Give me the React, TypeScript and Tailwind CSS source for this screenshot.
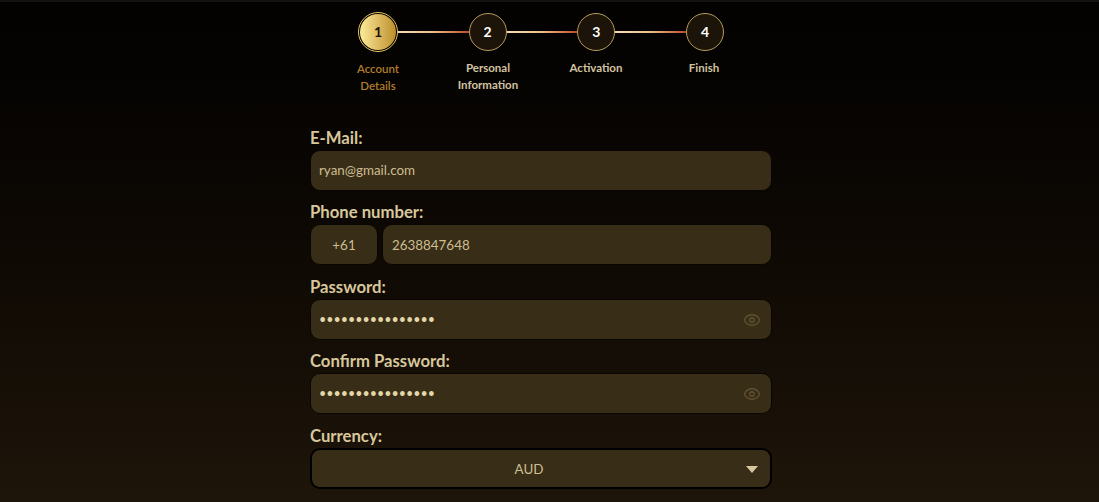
import { Eye } from 'lucide-react'

const steps = [
  { n: 1, label: ['Account', 'Details'] },
  { n: 2, label: ['Personal', 'Information'] },
  { n: 3, label: ['Activation'] },
  { n: 4, label: ['Finish'] },
]

function Line() {
  return <div className="h-[2px] w-[70.67px] bg-gradient-to-r from-[#f5deb0] via-[#eebd8c] to-[#b9492c]" />
}

function Stepper() {
  return (
    <div className="flex flex-col items-center">
      <div className="flex items-center">
        <div className="flex h-10 w-10 items-center justify-center rounded-full border border-[#e8c65c] bg-black p-[1px]">
          <div className="flex h-full w-full items-center justify-center rounded-full bg-gradient-to-r from-[#fdeb98] to-[#bd8f27] text-sm font-bold text-[#1a1206]">
            1
          </div>
        </div>
        {steps.slice(1).map((s) => (
          <div key={s.n} className="flex items-center">
            <Line />
            <div className="flex h-[38px] w-[38px] items-center justify-center rounded-full border border-[#b79b5c] bg-[#1c1409] text-sm font-bold text-white">
              {s.n}
            </div>
          </div>
        ))}
      </div>
      <div className="flex pt-[7px]">
        {steps.map((s, i) => (
          <div
            key={s.n}
            className={
              i === 0
                ? 'mt-[1px] mr-[2px] w-[108px] text-center text-[11.5px] leading-[17px] font-semibold text-[#b07d2a]'
                : 'w-[108px] text-center text-[11.5px] leading-[17px] font-bold text-[#d2c3a0]'
            }
          >
            {s.label.map((l) => (
              <div key={l}>{l}</div>
            ))}
          </div>
        ))}
      </div>
    </div>
  )
}

function Label({ children }: { children: string }) {
  return <div className="h-[24px] pt-[1px] text-[16.7px] leading-[22px] font-bold text-[#d8c79c]">{children}</div>
}

const fieldClass = 'h-[41px] rounded-[10px] border-[1.5px] border-[#080502] bg-[#382d16] outline-none'

function PasswordField() {
  return (
    <div className="relative">
      <input
        type="password"
        readOnly
        value="ryanpassword1234"
        className={fieldClass + ' w-full px-[8px] text-[12.5px] text-[#e3d6a8]'}
      />
      <Eye className="absolute top-[12px] right-[11px] h-[18px] w-[18px] text-[#5f5033]" strokeWidth={1.8} />
    </div>
  )
}

export default function App() {
  return (
    <div
      className="h-screen overflow-hidden border-t-2 border-[#131313] bg-gradient-to-b from-[#030201] to-[#1e150a] pr-[17px]"
      style={{ fontFamily: 'Lato, "Noto Sans", sans-serif' }}
    >
      <div className="flex flex-col items-center pt-[10px]">
        <Stepper />
        <div className="mt-[31.5px] flex w-[462px] flex-col gap-[9.67px]">
          <div>
            <Label>E-Mail:</Label>
            <input readOnly value="ryan@gmail.com" className={fieldClass + ' w-full px-[8px] text-[13.4px] text-[#cdbd92]'} />
          </div>
          <div>
            <Label>Phone number:</Label>
            <div className="flex gap-[4px]">
              <input readOnly value="+61" className={fieldClass + ' w-[68px] shrink-0 text-center text-[13.4px] text-[#cdbd92]'} />
              <input readOnly value="2638847648" className={fieldClass + ' min-w-0 flex-1 px-[9px] text-[13.4px] text-[#cdbd92]'} />
            </div>
          </div>
          <div>
            <Label>Password:</Label>
            <PasswordField />
          </div>
          <div>
            <Label>Confirm Password:</Label>
            <PasswordField />
          </div>
          <div>
            <Label>Currency:</Label>
            <div className="relative flex h-[41px] items-center justify-center rounded-[10px] border-[2.5px] border-black bg-[#382d16] pr-[24px] text-[13.4px] text-[#cdbd92]">
              AUD
              <svg className="absolute top-[15.5px] right-[12px]" width="12" height="7" viewBox="0 0 12 7">
                <path d="M0 0h12L6 7z" fill="#d6c6a0" />
              </svg>
            </div>
          </div>
        </div>
      </div>
    </div>
  )
}
